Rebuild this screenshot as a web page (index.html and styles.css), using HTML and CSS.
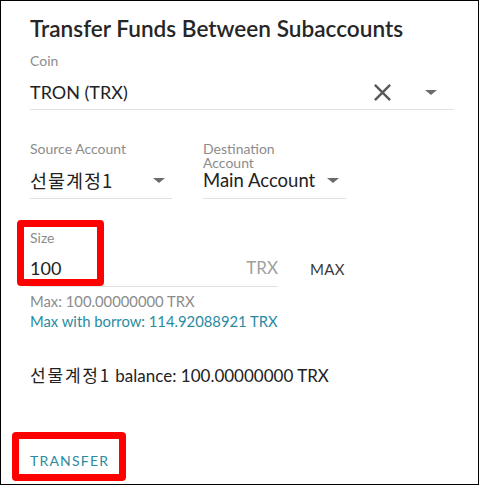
FILE: index.html
```html
<!DOCTYPE html>
<html>
<head>
<meta charset="utf-8">
<link rel="stylesheet" href="styles.css">
</head>
<body>
<div class="dialog">
  <h1 class="title">Transfer Funds Between Subaccounts</h1>

  <div class="field coin-field">
    <div class="label">Coin</div>
    <div class="select-row">
      <span class="value value-lg">TRON (TRX)</span>
      <span class="coin-icons">
        <svg class="close-icon" width="29" height="29" viewBox="0 0 24 24"><path d="M19 6.41L17.59 5 12 10.59 6.41 5 5 6.41 10.59 12 5 17.59 6.41 19 12 13.41 17.59 19 19 17.59 13.41 12z" fill="#595959"/></svg>
        <span class="arrow"></span>
      </span>
    </div>
  </div>

  <div class="accounts">
    <div class="field account source">
      <div class="label">Source Account</div>
      <div class="select-row">
        <span class="value value-md kr">선물계정1</span>
        <span class="arrow"></span>
      </div>
    </div>
    <div class="field account dest">
      <div class="label label-wrap">Destination<br>Account</div>
      <div class="select-row">
        <span class="value value-md">Main Account</span>
        <span class="arrow"></span>
      </div>
    </div>
  </div>

  <div class="size-row">
    <div class="field size-field">
      <div class="label">Size</div>
      <div class="select-row">
        <span class="value value-size">100</span>
        <span class="unit">TRX</span>
      </div>
    </div>
    <button class="max-btn">MAX</button>
  </div>

  <div class="helper">Max: 100.00000000 TRX</div>
  <div class="helper link">Max with borrow: 114.92088921 TRX</div>

  <div class="balance"><span class="kr kr-balance">선물계정1</span> balance: 100.00000000 TRX</div>

  <button class="transfer-btn">TRANSFER</button>

  <div class="mark mark-size"></div>
  <div class="mark mark-transfer"></div>
</div>
</body>
</html>
```

FILE: styles.css
```css
* { box-sizing: border-box; }
html, body { margin: 0; padding: 0; background: #fff; }
body {
  font-family: Lato, "Noto Sans CJK KR", sans-serif;
  color: #222;
}
.kr { font-family: "Noto Sans CJK KR", Lato, sans-serif; }
.dialog {
  position: relative;
  width: 479px;
  height: 485px;
  border: 1px solid #000;
  padding: 14px 25px 0 29px;
  overflow: hidden;
}
.title {
  margin: 0;
  font-size: 22.6px;
  line-height: 28px;
  font-weight: 600;
  color: #262626;
}
.field {
  border-bottom: 1px solid #e2e2e2;
}
.label {
  font-size: 14px;
  line-height: 14px;
  color: #8c8c8c;
}
.coin-field {
  margin-top: 10px;
  width: 424px;
  padding-bottom: 5px;
}
.coin-field .label { line-height: 16px; }
.select-row {
  display: flex;
  align-items: center;
}
.coin-field .select-row { margin-top: 11px; height: 24px; }
.value { color: #222; white-space: nowrap; }
.value-lg { font-size: 18px; line-height: 24px; flex: 1; }
.coin-icons {
  display: flex;
  align-items: center;
}
.close-icon { display: block; margin-right: 28px; }
.arrow {
  display: block;
  width: 0;
  height: 0;
  border-left: 6px solid transparent;
  border-right: 6px solid transparent;
  border-top: 5px solid #6b6b6b;
  margin-right: 17px;
}
.accounts {
  display: flex;
  gap: 31px;
  margin-top: 32px;
}
.account {
  display: flex;
  flex-direction: column;
  justify-content: space-between;
  padding-bottom: 8px;
}
.source { width: 142px; }
.dest { width: 143px; }
.account .select-row { justify-content: space-between; height: 20px; }
.account .arrow { margin-right: 7px; }
.value-md { font-size: 18.5px; line-height: 20px; }
.source .value-md { letter-spacing: 1px; }
.size-row {
  display: flex;
  align-items: flex-end;
  margin-top: 32px;
}
.size-field {
  width: 248px;
  padding-bottom: 6px;
}
.size-field .select-row { margin-top: 11px; height: 24px; }
.value-size { font-size: 18px; line-height: 24px; flex: 1; }
.unit {
  font-size: 17px;
  line-height: 24px;
  color: #a0a0a0;
}
.max-btn {
  border: 0;
  background: none;
  font-family: Lato, sans-serif;
  font-size: 15px;
  line-height: 24px;
  color: #3a3a3a;
  padding: 0;
  margin: 0 0 6px 32px;
  letter-spacing: 0.3px;
}
.helper {
  font-size: 14.8px;
  line-height: 20px;
  color: #8c8c8c;
}
.size-row + .helper { margin-top: 4px; }
.helper.link { color: #2a8ba0; }
.balance {
  margin-top: 32px;
  font-size: 17px;
  line-height: 24px;
  color: #222;
}
.kr-balance { letter-spacing: 1.8px; }
.transfer-btn {
  display: block;
  margin-top: 63px;
  border: 0;
  background: none;
  padding: 0;
  font-family: Lato, sans-serif;
  font-size: 14px;
  line-height: 20px;
  letter-spacing: 1.2px;
  color: #2a8ba0;
}
.mark {
  position: absolute;
  border: 7px solid #ff0000;
  border-radius: 4px;
}
.mark-size { left: 16px; top: 219px; width: 87px; height: 66px; }
.mark-transfer { left: 11px; top: 431px; width: 114px; height: 49px; }
```
